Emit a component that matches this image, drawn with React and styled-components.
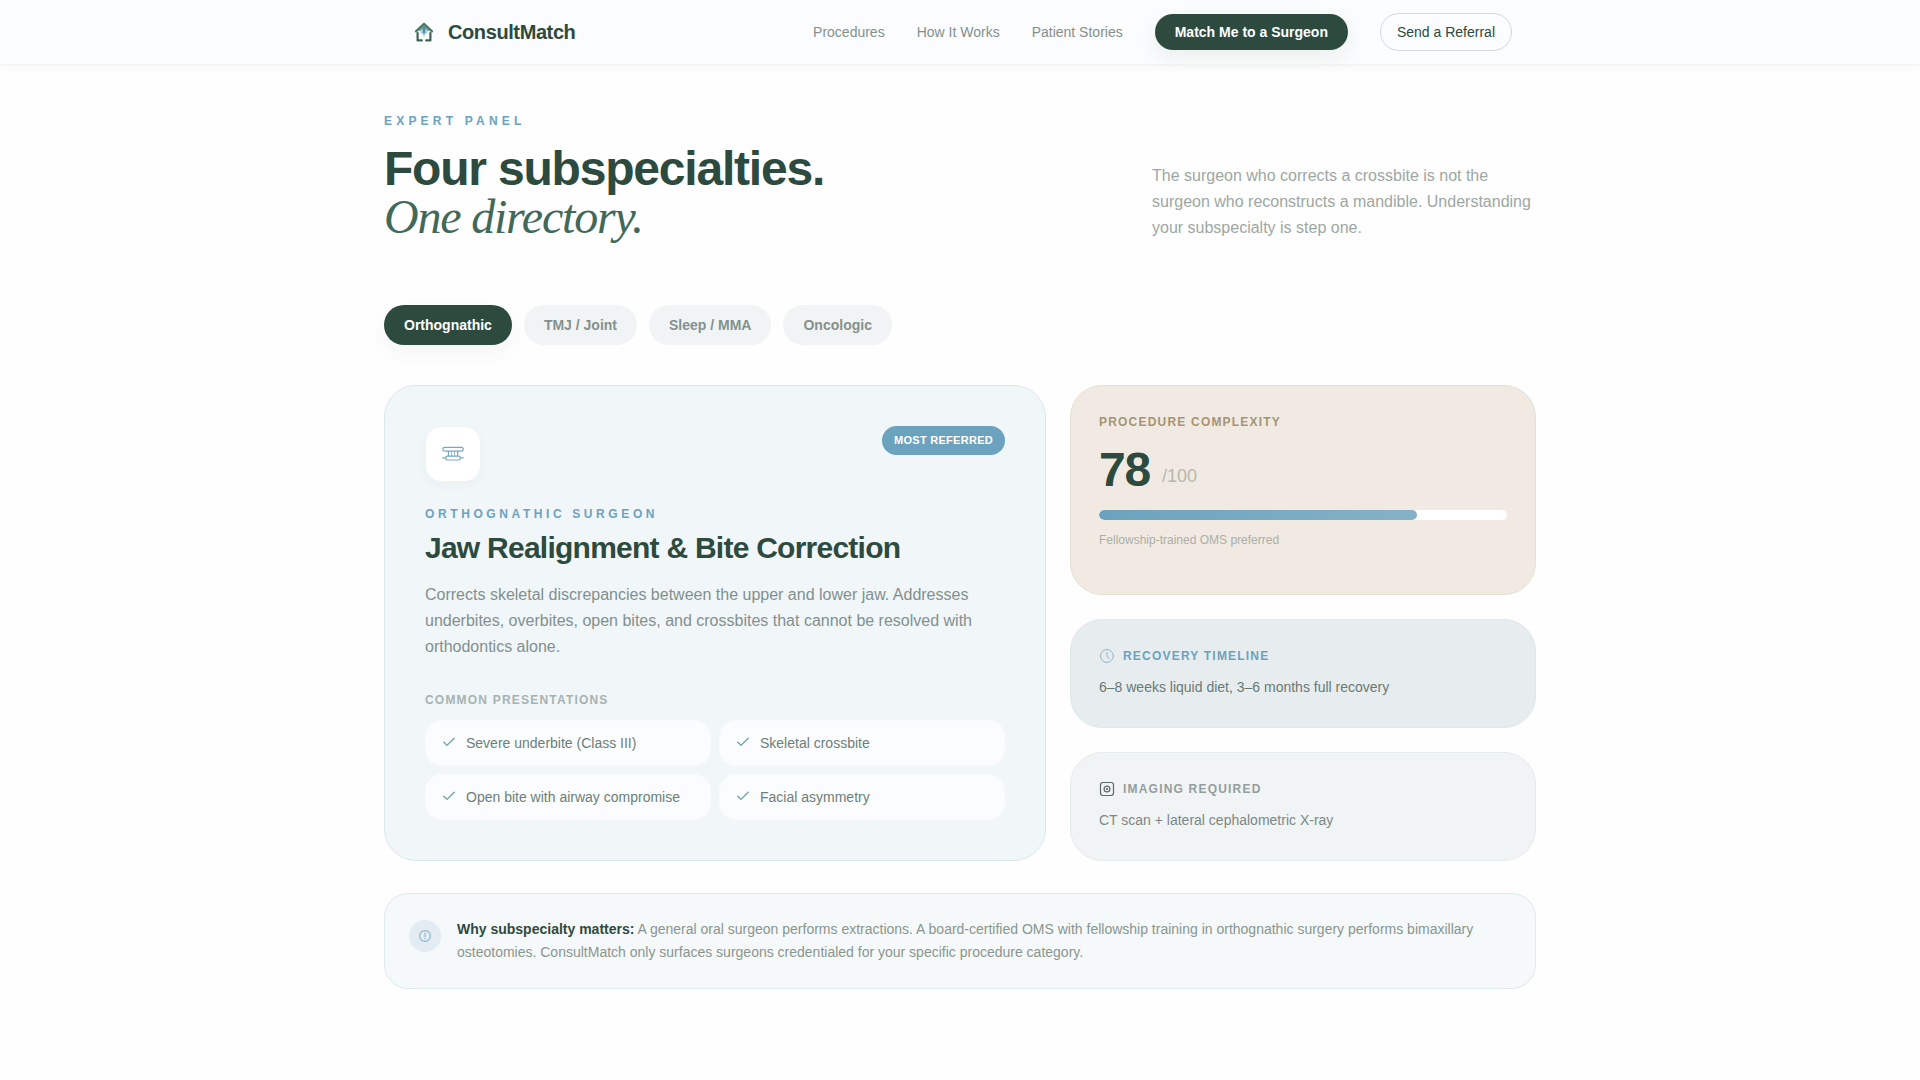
import React, { useState } from "react";
import styled, { createGlobalStyle, css } from "styled-components";

const sans = '"Liberation Sans", Arial, Helvetica, sans-serif';
const serif = '"Liberation Serif", "Times New Roman", serif';

const color = {
  green: "#2d4a3e",
  moss: "#41695a",
  blue: "#6ba3be",
  sand: "#a69474",
};

const GlobalStyle = createGlobalStyle`
  *, *::before, *::after { box-sizing: border-box; }
  body {
    margin: 0;
    min-height: 100vh;
    background: #fefefe;
    color: ${color.green};
    font-family: ${sans};
    font-size: 16px;
    line-height: 24px;
  }
  h1, h2, h3, p, ul { margin: 0; padding: 0; }
  button { font-family: inherit; cursor: pointer; }
`;

const Header = styled.header`
  background: #fbfcfd;
  border-bottom: 1px solid #f3f5f5;
  box-shadow: 0 2px 8px rgba(45, 74, 62, 0.05);
`;

const HeaderInner = styled.div`
  max-width: 1152px;
  height: 64px;
  margin: 0 auto;
  padding: 0 24px;
  display: flex;
  align-items: center;
  justify-content: space-between;
`;

const Brand = styled.a`
  display: flex;
  align-items: center;
  gap: 8px;
  color: ${color.green};
  font-size: 20px;
  line-height: 28px;
  font-weight: 700;
  letter-spacing: -0.02em;
  text-decoration: none;
`;

const Nav = styled.nav`
  display: flex;
  align-items: center;
  gap: 32px;
`;

const NavLink = styled.a`
  color: #84908d;
  font-size: 14px;
  line-height: 20px;
  text-decoration: none;
`;

const NavButton = styled.button`
  padding: 8px 16px;
  border: 1px solid #d3dadc;
  border-radius: 20px;
  background: transparent;
  color: ${color.green};
  font-size: 14px;
  line-height: 20px;
  ${(p) =>
    p.$primary &&
    css`
      padding: 8px 20px;
      border: 0;
      background: ${color.green};
      color: #ffffff;
      font-weight: 700;
      box-shadow: 0 8px 20px rgba(45, 74, 62, 0.07);
    `}
`;

const Main = styled.main`
  max-width: 1152px;
  margin: 0 auto;
  padding: 48px 0 90px;
`;

const Intro = styled.div`
  display: flex;
  align-items: flex-end;
  justify-content: space-between;
  margin-bottom: 64px;
`;

const Eyebrow = styled.p`
  color: ${color.blue};
  font-size: 12px;
  line-height: 16px;
  font-weight: 700;
  letter-spacing: ${(p) => (p.$wide ? "0.35em" : "0.3em")};
  text-transform: uppercase;
`;

const Headline = styled.h1`
  margin-top: 16px;
  font-size: 48px;
  line-height: 48px;
  font-weight: 700;
  letter-spacing: -0.025em;

  em {
    display: block;
    color: ${color.moss};
    font-family: ${serif};
    font-weight: 400;
  }
`;

const Lead = styled.p`
  width: 384px;
  color: #9da7a3;
  font-size: 16px;
  line-height: 26px;
`;

const Tabs = styled.div`
  display: flex;
  gap: 12px;
  margin-bottom: 40px;
`;

const Tab = styled.button`
  padding: 10px 20px;
  border: 0;
  border-radius: 20px;
  background: ${(p) => (p.$active ? color.green : "#f1f4f5")};
  color: ${(p) => (p.$active ? "#ffffff" : "#84918d")};
  box-shadow: ${(p) => (p.$active ? "0 8px 20px rgba(45, 74, 62, 0.05)" : "none")};
  font-size: 14px;
  line-height: 20px;
  font-weight: 700;
`;

const Panel = styled.div`
  display: grid;
  grid-template-columns: repeat(12, minmax(0, 1fr));
  gap: 24px;
`;

const SpecialtyCard = styled.article`
  grid-column: span 7;
  padding: 40px;
  border: 1px solid #dce7eb;
  border-radius: 32px;
  background: #f1f6f9;
`;

const CardTop = styled.div`
  display: flex;
  align-items: flex-start;
  justify-content: space-between;
  margin-bottom: 24px;
`;

const IconTile = styled.div`
  display: grid;
  place-items: center;
  width: 56px;
  height: 56px;
  border: 1px solid #eff3f5;
  border-radius: 16px;
  background: #ffffff;
  box-shadow: 0 4px 10px rgba(45, 74, 62, 0.03);
`;

const Badge = styled.span`
  padding: 6px 12px;
  border-radius: 16px;
  background: ${color.blue};
  color: #ffffff;
  font-size: 11px;
  line-height: 17px;
  font-weight: 700;
  letter-spacing: 0.025em;
  text-transform: uppercase;
`;

const CardTitle = styled.h2`
  margin: 8px 0 16px;
  font-size: 30px;
  line-height: 36px;
  font-weight: 700;
  letter-spacing: -0.025em;
`;

const CardText = styled.p`
  margin-bottom: 32px;
  color: #82908e;
  font-size: 16px;
  line-height: 26px;
`;

const Label = styled.h3`
  display: flex;
  align-items: center;
  gap: 8px;
  color: ${(p) => p.$tone};
  font-size: 12px;
  line-height: 16px;
  font-weight: 700;
  letter-spacing: 0.1em;
  text-transform: uppercase;
`;

const Presentations = styled.ul`
  display: grid;
  grid-template-columns: 1fr 1fr;
  gap: 8px;
  margin-top: 12px;
  list-style: none;
`;

const Presentation = styled.li`
  display: flex;
  align-items: flex-start;
  gap: 8px;
  padding: 12px 16px;
  border: 1px solid #f8fafb;
  border-radius: 16px;
  background: #fbfcfd;
  color: #6d7f7a;
  font-size: 14px;
  line-height: 20px;
`;

const Side = styled.div`
  grid-column: span 5;
  display: flex;
  flex-direction: column;
  gap: 24px;
`;

const sideTones = {
  sand: css`
    flex: 1;
    background: #f0eae2;
    border-color: #e6e0d4;
  `,
  mist: css`
    background: #e7ecee;
    border-color: #dfe7e9;
  `,
  cloud: css`
    background: #f1f4f5;
    border-color: #e5ebec;
  `,
};

const SideCard = styled.section`
  padding: 28px;
  border: 1px solid;
  border-radius: 32px;
  ${(p) => sideTones[p.$tone]}
`;

const SideText = styled.p`
  margin-top: 12px;
  color: ${(p) => (p.$soft ? "#7b8885" : "#687a76")};
  font-size: 14px;
  line-height: 23px;
`;

const Score = styled.div`
  display: flex;
  align-items: flex-end;
  gap: 12px;
  margin: 16px 0;

  strong {
    font-size: 48px;
    line-height: 48px;
    letter-spacing: -0.025em;
  }

  span {
    margin-bottom: 4px;
    color: #b7b8b0;
    font-size: 18px;
    line-height: 28px;
  }
`;

const Track = styled.div`
  height: 10px;
  border-radius: 5px;
  background: #ffffff;
  overflow: hidden;
`;

const Fill = styled.div`
  height: 100%;
  border-radius: 5px;
  background: linear-gradient(90deg, #6ba3be, #85b1c7);
`;

const Caption = styled.p`
  margin-top: 12px;
  color: #acaea6;
  font-size: 12px;
  line-height: 16px;
`;

const Callout = styled.aside`
  display: flex;
  align-items: flex-start;
  gap: 16px;
  margin-top: 32px;
  padding: 24px;
  border: 1px solid #dfeaec;
  border-radius: 24px;
  background: #f6f9fa;
`;

const CalloutIcon = styled.div`
  display: grid;
  place-items: center;
  flex: none;
  width: 32px;
  height: 32px;
  margin-top: 2px;
  border-radius: 50%;
  background: #e2ecf2;
`;

const CalloutText = styled.p`
  color: #89958f;
  font-size: 14px;
  line-height: 23px;

  strong {
    color: ${color.green};
  }
`;

function LogoIcon() {
  return (
    <svg width="32" height="32" viewBox="0 0 32 32" fill="none" aria-hidden="true">
      <path d="M16 8 23 14.8H9Z" fill="#6f9f98" />
      <path d="M12.6 13.6h6.8v3.2L16 19.4l-3.4-2.6Z" fill="#a5c8d8" />
      <path d="M8 15.4 16 7.8l8 7.6" stroke="#4a7865" strokeWidth="2.2" strokeLinecap="round" strokeLinejoin="round" />
      <path d="M9.6 17v7.4h4.2M22.4 17v7.4h-4.2" stroke="#3f6455" strokeWidth="2.2" strokeLinecap="round" strokeLinejoin="round" />
      <path d="M16 11.4v5.2" stroke="#4d86a8" strokeWidth="2" strokeLinecap="round" />
      <path d="M16 17.6v3" stroke="#b9cfd2" strokeWidth="1" strokeLinecap="round" />
    </svg>
  );
}

function JawIcon() {
  return (
    <svg width="24" height="24" viewBox="0 0 24 24" fill="none" stroke="#79a9bf" strokeWidth="1.2" strokeLinecap="round" aria-hidden="true">
      <rect x="1.8" y="5.4" width="20.4" height="3.8" rx="1.9" />
      <path d="M7.4 9.4v4.6M16.6 9.4v4.6" />
      <path d="M10.6 9.4v4.6M13.4 9.4v4.6" strokeWidth="0.8" />
      <rect x="4.6" y="14.2" width="14.8" height="3.8" rx="1.9" />
      <path d="M1.6 15.8h2.2M20.2 15.8h2.2" />
    </svg>
  );
}

function CheckIcon() {
  return (
    <svg width="16" height="16" viewBox="0 0 16 16" fill="none" stroke="#6d9fa8" strokeWidth="1.3" strokeLinecap="round" strokeLinejoin="round" aria-hidden="true">
      <path d="M1.8 9.2 5 12.4l7.2-7.2" />
    </svg>
  );
}

function ClockIcon() {
  return (
    <svg width="16" height="16" viewBox="0 0 16 16" fill="none" stroke="#8fb5c4" strokeWidth="1" strokeLinecap="round" strokeLinejoin="round" aria-hidden="true">
      <circle cx="8" cy="8" r="6.4" />
      <path d="M8 4.4V8l2 2.8" />
    </svg>
  );
}

function ScanIcon() {
  return (
    <svg width="16" height="16" viewBox="0 0 16 16" fill="none" stroke="#5d6966" aria-hidden="true">
      <rect x="1.5" y="1.5" width="13" height="13" rx="2.4" strokeWidth="1.2" />
      <circle cx="8" cy="8" r="2.9" strokeWidth="1.2" />
      <circle cx="8" cy="8" r="1.1" fill="#4c5855" stroke="none" />
    </svg>
  );
}

function AlertIcon() {
  return (
    <svg width="14" height="14" viewBox="0 0 14 14" fill="none" stroke="#8db6ca" strokeWidth="1.1" strokeLinecap="round" aria-hidden="true">
      <circle cx="7" cy="7" r="5.4" />
      <path d="M7 4v3.4M7 9.4v.2" />
    </svg>
  );
}

const links = ["Procedures", "How It Works", "Patient Stories"];
const specialties = ["Orthognathic", "TMJ / Joint", "Sleep / MMA", "Oncologic"];
const presentations = [
  "Severe underbite (Class III)",
  "Skeletal crossbite",
  "Open bite with airway compromise",
  "Facial asymmetry",
];
const complexity = 78;

export default function App() {
  const [active, setActive] = useState(specialties[0]);

  return (
    <>
      <GlobalStyle />
      <Header>
        <HeaderInner>
          <Brand href="#">
            <LogoIcon />
            ConsultMatch
          </Brand>
          <Nav>
            {links.map((link) => (
              <NavLink key={link} href="#">
                {link}
              </NavLink>
            ))}
            <NavButton type="button" $primary>
              Match Me to a Surgeon
            </NavButton>
            <NavButton type="button">Send a Referral</NavButton>
          </Nav>
        </HeaderInner>
      </Header>

      <Main>
        <Intro>
          <div>
            <Eyebrow $wide>Expert Panel</Eyebrow>
            <Headline>
              Four subspecialties.
              <em>One directory.</em>
            </Headline>
          </div>
          <Lead>
            The surgeon who corrects a crossbite is not the surgeon who reconstructs a mandible. Understanding your
            subspecialty is step one.
          </Lead>
        </Intro>

        <Tabs role="tablist">
          {specialties.map((name) => (
            <Tab
              key={name}
              type="button"
              role="tab"
              aria-selected={name === active}
              $active={name === active}
              onClick={() => setActive(name)}
            >
              {name}
            </Tab>
          ))}
        </Tabs>

        <Panel>
          <SpecialtyCard>
            <CardTop>
              <IconTile>
                <JawIcon />
              </IconTile>
              <Badge>Most Referred</Badge>
            </CardTop>
            <Eyebrow>Orthognathic Surgeon</Eyebrow>
            <CardTitle>Jaw Realignment &amp; Bite Correction</CardTitle>
            <CardText>
              Corrects skeletal discrepancies between the upper and lower jaw. Addresses underbites, overbites, open
              bites, and crossbites that cannot be resolved with orthodontics alone.
            </CardText>
            <Label $tone="#a6b3b2">Common Presentations</Label>
            <Presentations>
              {presentations.map((item) => (
                <Presentation key={item}>
                  <CheckIcon />
                  {item}
                </Presentation>
              ))}
            </Presentations>
          </SpecialtyCard>

          <Side>
            <SideCard $tone="sand">
              <Label $tone={color.sand}>Procedure Complexity</Label>
              <Score>
                <strong>{complexity}</strong>
                <span>/100</span>
              </Score>
              <Track
                role="progressbar"
                aria-label="Procedure complexity"
                aria-valuenow={complexity}
                aria-valuemin={0}
                aria-valuemax={100}
              >
                <Fill style={{ width: `${complexity}%` }} />
              </Track>
              <Caption>Fellowship-trained OMS preferred</Caption>
            </SideCard>
            <SideCard $tone="mist">
              <Label $tone={color.blue}>
                <ClockIcon />
                Recovery Timeline
              </Label>
              <SideText>6–8 weeks liquid diet, 3–6 months full recovery</SideText>
            </SideCard>
            <SideCard $tone="cloud">
              <Label $tone="#949e9c">
                <ScanIcon />
                Imaging Required
              </Label>
              <SideText $soft>CT scan + lateral cephalometric X-ray</SideText>
            </SideCard>
          </Side>
        </Panel>

        <Callout>
          <CalloutIcon>
            <AlertIcon />
          </CalloutIcon>
          <CalloutText>
            <strong>Why subspecialty matters:</strong> A general oral surgeon performs extractions. A board-certified
            OMS with fellowship training in orthognathic surgery performs bimaxillary osteotomies. ConsultMatch only
            surfaces surgeons credentialed for your specific procedure category.
          </CalloutText>
        </Callout>
      </Main>
    </>
  );
}
